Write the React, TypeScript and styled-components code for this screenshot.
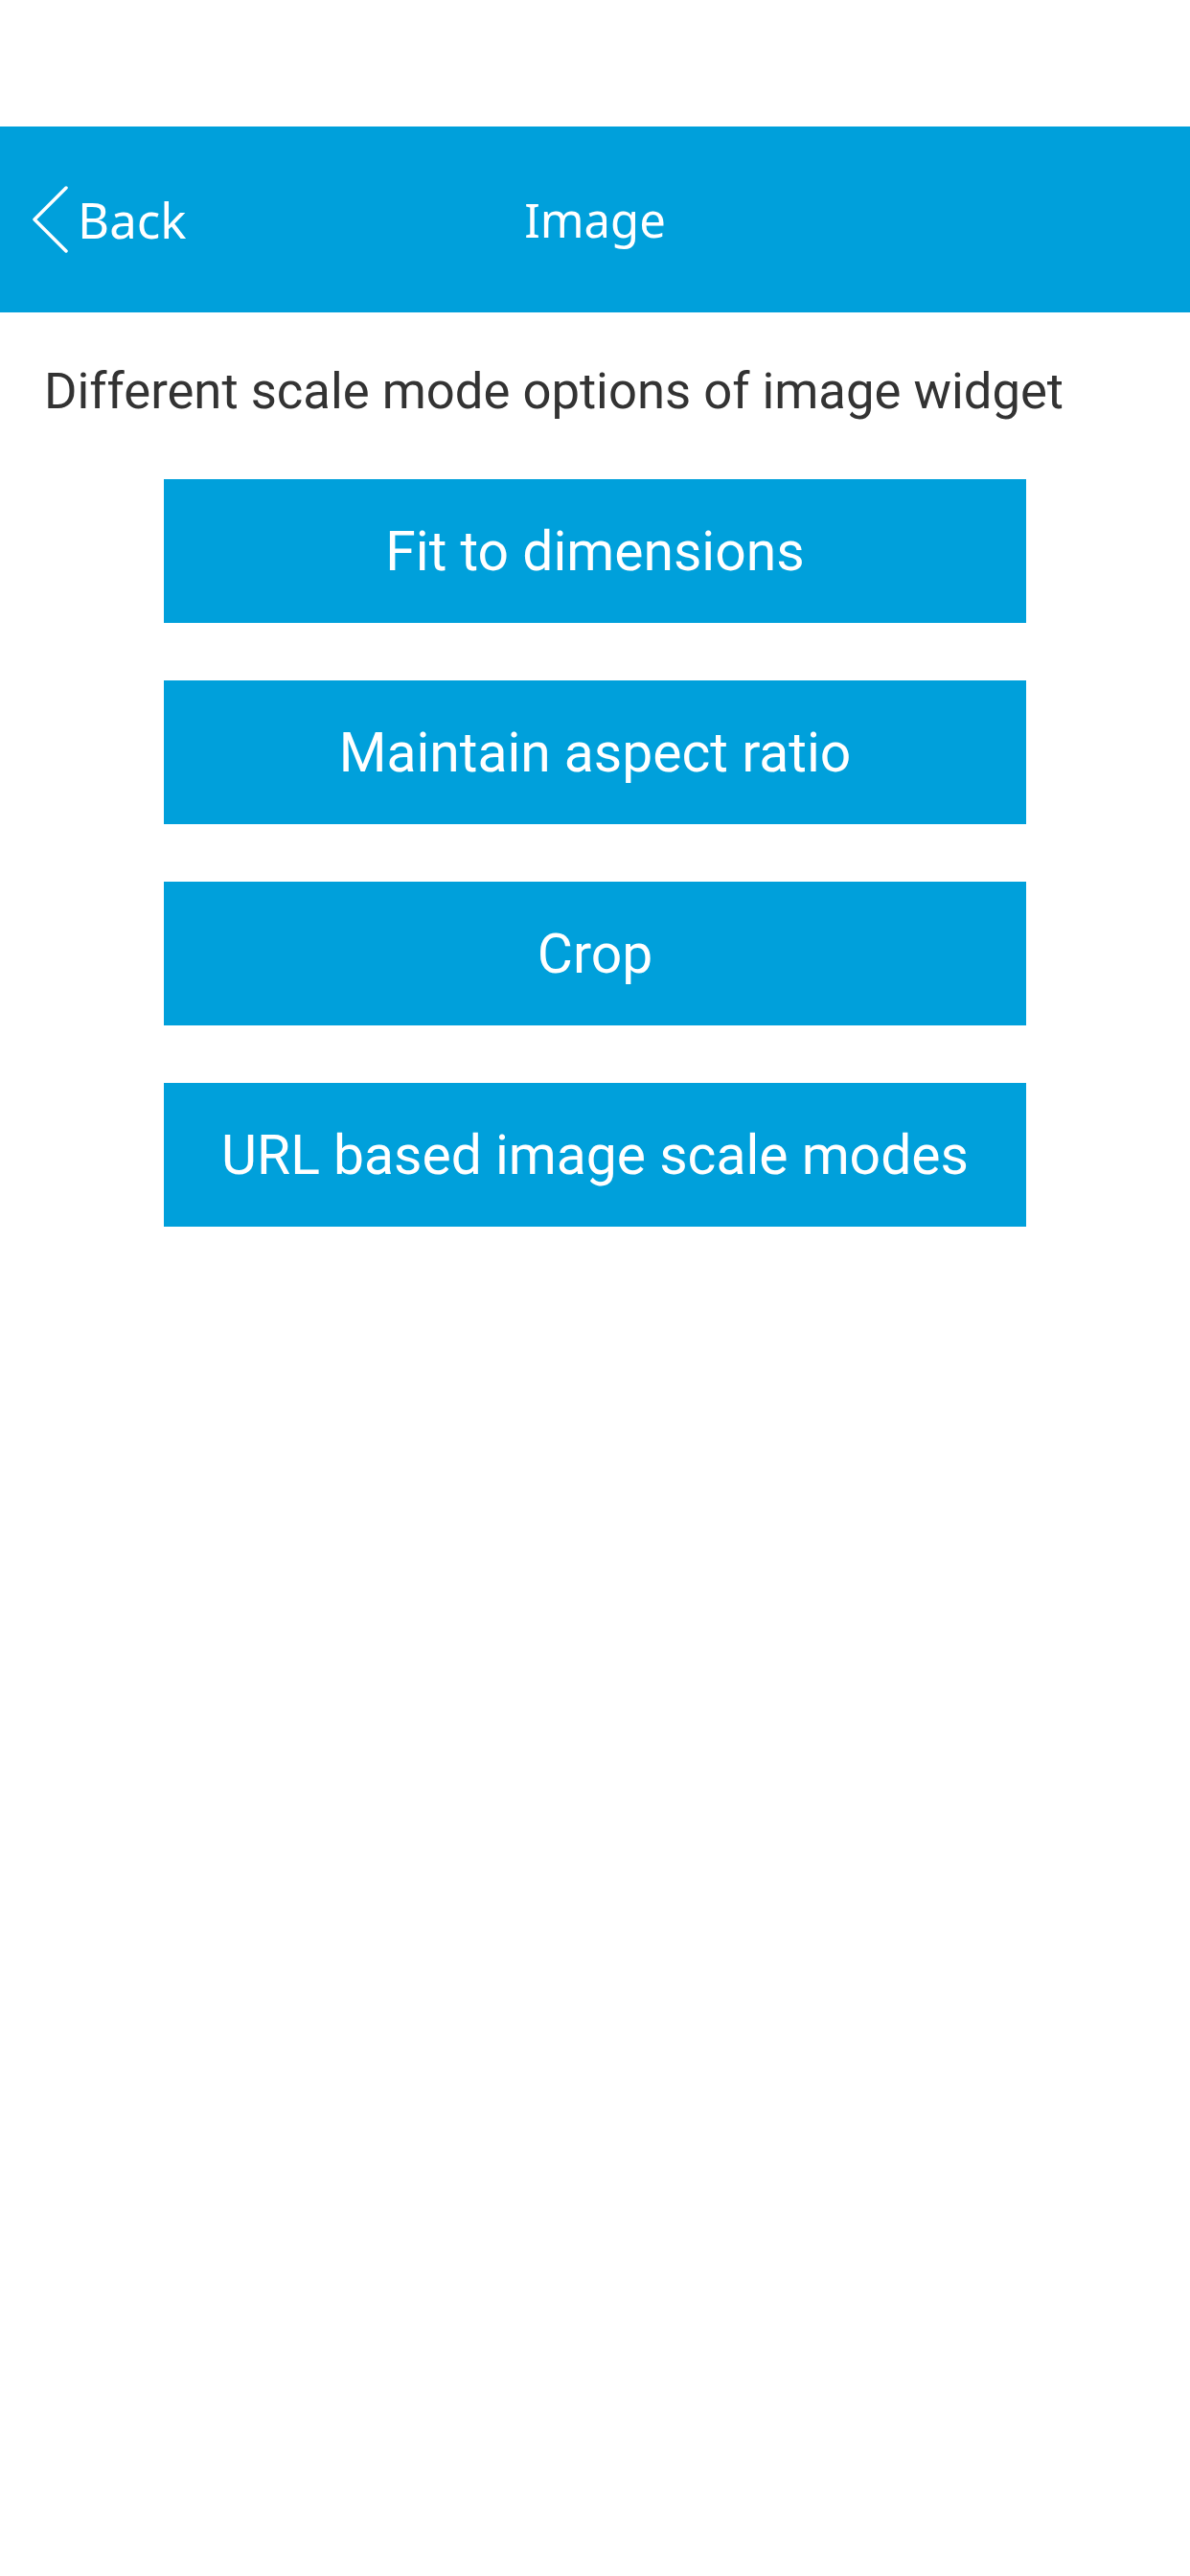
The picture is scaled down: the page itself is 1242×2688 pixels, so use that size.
import styled, { createGlobalStyle } from "styled-components";

const GlobalStyle = createGlobalStyle`
  html, body {
    margin: 0;
    padding: 0;
    background: #ffffff;
  }
  body {
    font-family: Roboto, "Noto Sans", "Liberation Sans", sans-serif;
  }
`;

const Screen = styled.div`
  width: 1242px;
  min-height: 2688px;
  padding-top: 132px;
  box-sizing: border-box;
  background: #ffffff;
`;

const Header = styled.header`
  position: relative;
  height: 194px;
  background-color: #00a0db;
  display: flex;
  align-items: center;
  justify-content: center;
  font-family: "Noto Sans", Roboto, sans-serif;
`;

const BackButton = styled.button`
  position: absolute;
  left: 33px;
  top: 0;
  bottom: 0;
  display: flex;
  align-items: center;
  gap: 10px;
  padding: 0;
  border: none;
  background: none;
  color: #ffffff;
  font-family: inherit;
  font-size: 51px;
  line-height: 1;
`;

const Title = styled.h1`
  margin: 0;
  color: #ffffff;
  font-size: 49px;
  font-weight: 400;
  line-height: 1;
`;

const Description = styled.p`
  margin: 51px 0 0 0;
  padding: 0 46px;
  color: #333333;
  font-size: 52.6px;
  line-height: 62px;
`;

const ButtonList = styled.div`
  margin-top: 61px;
  display: flex;
  flex-direction: column;
  align-items: center;
  gap: 60px;
`;

const ModeButton = styled.button`
  width: 900px;
  height: 150px;
  border: none;
  border-radius: 0;
  background-color: #00a0db;
  color: #ffffff;
  font-family: inherit;
  font-size: 57px;
  line-height: 1;
  display: flex;
  align-items: center;
  justify-content: center;
  padding: 0;
`;

const modes = [
  "Fit to dimensions",
  "Maintain aspect ratio",
  "Crop",
  "URL based image scale modes",
];

function App() {
  return (
    <>
      <GlobalStyle />
      <Screen>
        <Header>
          <BackButton type="button">
            <svg width="38" height="70" viewBox="0 0 38 70" fill="none">
              <path
                d="M36 2 L3 35 L36 68"
                stroke="#ffffff"
                strokeWidth="3.5"
                strokeLinecap="round"
                strokeLinejoin="round"
              />
            </svg>
            Back
          </BackButton>
          <Title>Image</Title>
        </Header>
        <Description>Different scale mode options of image widget</Description>
        <ButtonList>
          {modes.map((m) => (
            <ModeButton key={m} type="button">
              {m}
            </ModeButton>
          ))}
        </ButtonList>
      </Screen>
    </>
  );
}

export default App;
